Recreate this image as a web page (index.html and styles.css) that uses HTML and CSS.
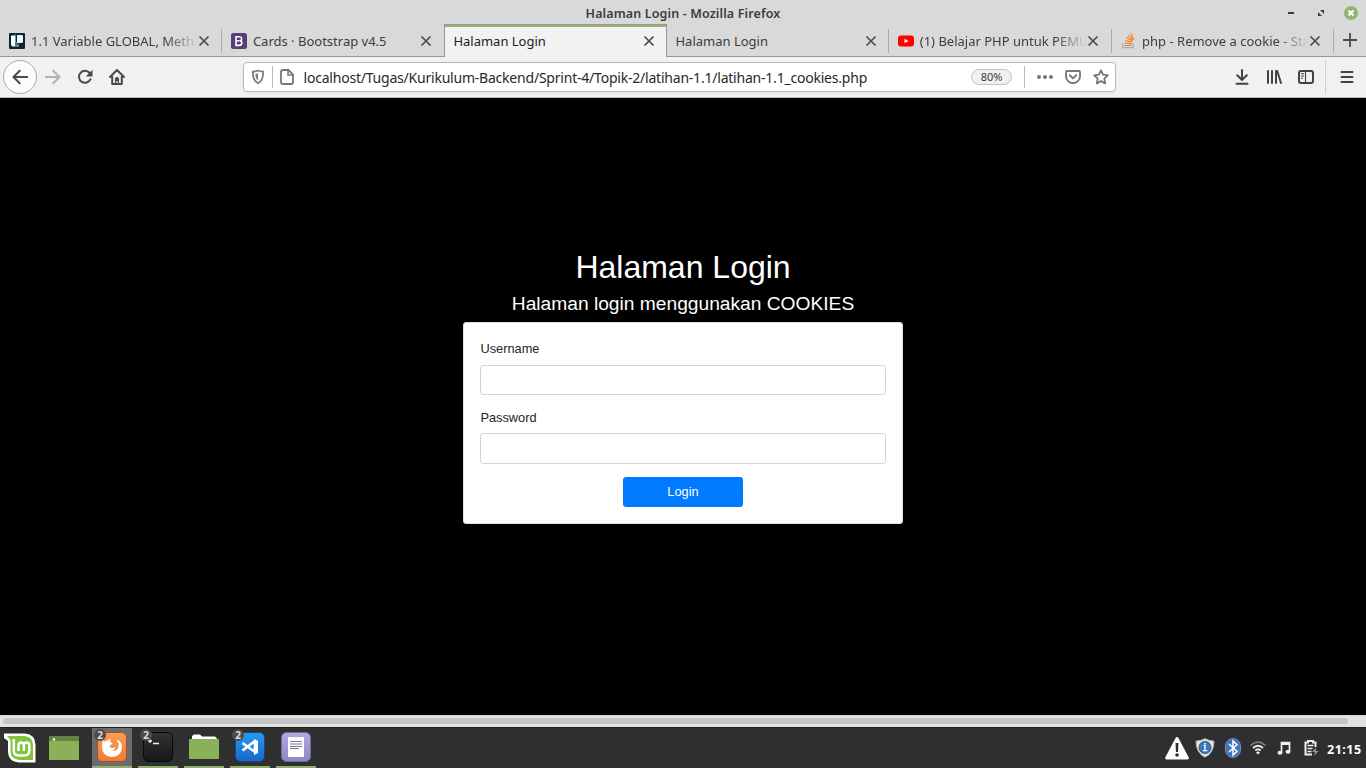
FILE: index.html
```html
<!DOCTYPE html>
<html lang="id">
<head>
<meta charset="utf-8">
<title>Halaman Login</title>
<link rel="stylesheet" href="styles.css">
</head>
<body>
<div class="screen">
  <header class="titlebar">
    <span class="window-title">Halaman Login - Mozilla Firefox</span>
    <div class="window-buttons">
      <svg width="8" height="16" viewBox="0 0 8 16"><path d="M1 7h6v2H1z" fill="#3c3c3c"/></svg>
      <svg width="8" height="16" viewBox="0 0 8 16"><path d="M3 5h4v4zM1 7v4h4z" fill="#3c3c3c"/></svg>
      <svg width="16" height="16" viewBox="0 0 16 16"><circle cx="8" cy="8" r="7" fill="#92b372"/><path d="M5.5 5.5l5 5m0-5l-5 5" stroke="#fff" stroke-width="2"/></svg>
    </div>
  </header>

  <nav class="tabs">
    <div class="tab tab-first">
      <svg class="favicon" width="16" height="16" viewBox="0 0 16 16"><rect width="16" height="16" rx="1" fill="#062733"/><path d="M2 2.500h4.500v11H3.500L2 12z" fill="#fff"/><path d="M8 2h5l1 1v6l-1 1H8z" fill="#eef7fa"/><path d="M5 2l2-1v3zM6 9h2v5H6z" fill="#348ca8"/><path d="M8 11h2v3H8z" fill="#a46c3f"/></svg>
      <span class="tab-label fade">1.1 Variable GLOBAL, Meth</span>
      <svg class="close" width="12" height="12" viewBox="0 0 12 12"><path d="M1.5 1.5l9 9m0-9l-9 9"/></svg>
    </div>
    <div class="tab">
      <svg class="favicon" width="16" height="16" viewBox="0 0 16 16"><rect width="16" height="16" rx="2.5" fill="#563d7c"/><path d="M5 3.700h3.500c2.700 0 2.900 3.400.5 4 2.800.5 2.300 4.700-.8 4.700H5zM5 7.800h3.600" fill="none" stroke="#fff" stroke-width="1.600"/></svg>
      <span class="tab-label">Cards · Bootstrap v4.5</span>
      <svg class="close" width="12" height="12" viewBox="0 0 12 12"><path d="M1.5 1.5l9 9m0-9l-9 9"/></svg>
    </div>
    <div class="tab tab-active">
      <span class="tab-label">Halaman Login</span>
      <svg class="close" width="12" height="12" viewBox="0 0 12 12"><path d="M1.5 1.5l9 9m0-9l-9 9"/></svg>
    </div>
    <div class="tab">
      <span class="tab-label">Halaman Login</span>
      <svg class="close" width="12" height="12" viewBox="0 0 12 12"><path d="M1.5 1.5l9 9m0-9l-9 9"/></svg>
    </div>
    <div class="tab">
      <svg class="favicon" width="16" height="16" viewBox="0 0 16 16"><rect y="2.500" width="16" height="11" rx="3" fill="#f00"/><path d="M6.500 5.700v4.600l4-2.300z" fill="#fff"/></svg>
      <span class="tab-label fade">(1) Belajar PHP untuk PEMU</span>
      <svg class="close" width="12" height="12" viewBox="0 0 12 12"><path d="M1.5 1.5l9 9m0-9l-9 9"/></svg>
    </div>
    <div class="tab">
      <svg class="favicon" width="16" height="16" viewBox="0 0 16 16"><path d="M2.700 10v4.700h10.600V10" fill="none" stroke="#a9adb2" stroke-width="1.300"/><path d="M4.500 12.500h7M4.600 10l7 .9M5.200 7.200l6.600 2.200M6.400 4.600l6 3.500M8.200 2.300l4.900 5M10.800.9l3 5.700" stroke="#f48024" stroke-width="1.200"/></svg>
      <span class="tab-label fade">php - Remove a cookie - Stack</span>
      <svg class="close" width="12" height="12" viewBox="0 0 12 12"><path d="M1.5 1.5l9 9m0-9l-9 9"/></svg>
    </div>
    <div class="new-tab">
      <svg width="14" height="14" viewBox="0 0 14 14"><path d="M7 0v14M0 7h14" stroke="#4a4a4a" stroke-width="1.800"/></svg>
    </div>
  </nav>

  <div class="toolbar">
    <div class="back"><svg width="16" height="16" viewBox="0 0 16 16"><path d="M15.200 8H1.500M7.700 1.800L1.500 8l6.200 6.200" fill="none" stroke="#4a4a4a" stroke-width="2" stroke-linecap="round" stroke-linejoin="round"/></svg></div>
    <div class="nav-icons">
      <svg width="16" height="16" viewBox="0 0 16 16"><path d="M.8 8h13.700M8.300 1.800L14.500 8l-6.200 6.200" fill="none" stroke="#b2b2b2" stroke-width="2" stroke-linecap="round" stroke-linejoin="round"/></svg>
      <svg width="16" height="16" viewBox="0 0 16 16"><path d="M13.500 10.200A6 6 0 1 1 12.600 4" fill="none" stroke="#4a4a4a" stroke-width="2" stroke-linecap="round"/><path d="M15.500.8v6.700H8.800z" fill="#4a4a4a"/></svg>
      <svg width="16" height="16" viewBox="0 0 16 16"><path d="M1 8l7-7 7 7M3.200 7.200V15h9.600V7.200" fill="none" stroke="#4a4a4a" stroke-width="2" stroke-linecap="round" stroke-linejoin="round"/><path d="M6 15V9.500Q6 8 8 8t2 1.500V15H8.800v-3H7.300v3z" fill="#4a4a4a"/></svg>
    </div>
    <div class="urlbar">
      <svg class="shield" width="14" height="16" viewBox="0 0 14 16"><path d="M7 1.500c2 .9 3.600 1.100 5.200 1.200.1 5-.8 9.200-5.200 11.600C2.600 11.900 1.700 7.700 1.800 2.700 3.400 2.600 5 2.400 7 1.500z" fill="none" stroke="#7d7d7d" stroke-width="1.800"/><path d="M7 4.300v7.200C5 9.900 4.400 7.600 4.400 5q1.500-.1 2.600-.7z" fill="#7d7d7d"/></svg>
      <span class="url-rule"></span>
      <svg class="doc" width="14" height="16" viewBox="0 0 14 16"><path d="M3 1h5.500L13 5.500V13q0 2-2 2H3q-2 0-2-2V3q0-2 2-2z" fill="none" stroke="#777" stroke-width="1.800"/><path d="M8 1v5h5" fill="none" stroke="#777" stroke-width="1.500"/></svg>
      <span class="url">localhost/Tugas/Kurikulum-Backend/Sprint-4/Topik-2/latihan-1.1/latihan-1.1_cookies.php</span>
      <span class="zoom">80%</span>
      <span class="url-rule"></span>
      <div class="url-icons">
        <svg width="16" height="16" viewBox="0 0 16 16"><g fill="#777"><circle cx="2" cy="8" r="2"/><circle cx="8" cy="8" r="2"/><circle cx="14" cy="8" r="2"/></g></svg>
        <svg width="16" height="16" viewBox="0 0 16 16"><path d="M2 2h12q1 0 1 1v4.200a7 7 0 0 1-14 0V3q0-1 1-1z" fill="none" stroke="#777" stroke-width="1.900"/><path d="M4.800 6.300L8 9.400l3.200-3.100" fill="none" stroke="#777" stroke-width="2" stroke-linecap="round" stroke-linejoin="round"/></svg>
        <svg width="16" height="16" viewBox="0 0 16 16"><path d="M8 1.400l2 4.200 4.800.7-3.500 3.300.9 4.800L8 12.100l-4.200 2.300.9-4.800L1.200 6.300 6 5.600z" fill="none" stroke="#777" stroke-width="1.800" stroke-linejoin="round"/></svg>
      </div>
    </div>
    <div class="tool-icons">
      <svg width="16" height="16" viewBox="0 0 16 16"><path d="M8 1v9.800M3.200 6.200L8 11l4.800-4.800M2.500 14.800h11" fill="none" stroke="#424242" stroke-width="2" stroke-linecap="round" stroke-linejoin="round"/></svg>
      <svg width="16" height="16" viewBox="0 0 16 16"><path d="M2 2v12M6 2v12M10 2v12M11.200 2L15 14" fill="none" stroke="#424242" stroke-width="2" stroke-linecap="round"/></svg>
      <svg width="16" height="16" viewBox="0 0 16 16"><rect x="1" y="2" width="14" height="12" rx="2" fill="none" stroke="#424242" stroke-width="2"/><path d="M7.500 2v12M3 4.800h3M3 7h3M3 9.200h2" stroke="#424242" stroke-width="1.100"/></svg>
    </div>
    <div class="menu"><svg width="14" height="16" viewBox="0 0 14 16"><path d="M1.500 3h11M1.500 8h11M1.500 13h11" stroke="#424242" stroke-width="2" stroke-linecap="round"/></svg></div>
  </div>

  <main class="page">
    <h1>Halaman Login</h1>
    <h2>Halaman login menggunakan COOKIES</h2>
    <form class="card">
      <label for="username">Username</label>
      <input id="username" type="text">
      <label for="password">Password</label>
      <input id="password" type="password">
      <button type="button">Login</button>
    </form>
  </main>

  <div class="scrollbar"><div class="thumb"></div></div>

  <footer class="panel">
    <svg class="mint" width="34" height="32" viewBox="0 0 34 32"><path d="M1 1.500h21Q32.500 2.500 32.500 13v17.500H16Q5 29.500 5 19V9L1 6z" fill="#fff"/><path d="M4 4h17.500Q30 5 30 13v15H16Q7.500 27 7.500 19V8z" fill="#81c341"/><path d="M10.800 7v11.500q0 5 5 5h5.500q5 0 5-5v-5q0-3-2.700-3t-2.700 3v5.500m0-5.500q0-3-2.700-3t-2.700 3v5.500" fill="none" stroke="#fff" stroke-width="2.500"/></svg>
    <svg class="desktop" width="30" height="24" viewBox="0 0 30 24"><rect width="30" height="24" fill="#8bb158"/><path d="M0 0h30v5H0z" fill="#668341"/><circle cx="5" cy="3.500" r="1.200" fill="#fff"/></svg>
    <div class="tasks">
      <div class="task focused">
        <svg width="30" height="30" viewBox="0 0 30 30"><defs><linearGradient id="orange" x2="0" y2="1"><stop stop-color="#fc9d58"/><stop offset="1" stop-color="#f27a33"/></linearGradient></defs><rect x=".5" y=".5" width="29" height="29" rx="5" fill="url(#orange)" stroke="#9a552a"/><path d="M7 6q-1 2.500 0 4 2-1.800 4-1.500l2.500-2-.3 3.300 2.500 1.700-3.200 2.200q.3 2.300 2.700 2.300 2 0 3.800-1.500-1.300 4.300-5 3.500 6 2.300 7.500-3 .8-4-2.500-7.500Q25 9 25 15q-.4 9.700-10 10Q5 24.500 5 14.500q0-5 2-8.500z" fill="#fff"/></svg>
        <span class="badge">2</span>
      </div>
      <div class="task">
        <svg width="30" height="30" viewBox="0 0 30 30"><defs><linearGradient id="black" x2="0" y2="1"><stop stop-color="#333"/><stop offset="1" stop-color="#171717"/></linearGradient></defs><rect x=".5" y=".5" width="29" height="29" rx="5" fill="url(#black)" stroke="#080808"/><path d="M5 9h4M7 7v4M10 11.500h6" stroke="#eee" stroke-width="1.300"/></svg>
        <span class="badge">2</span>
      </div>
      <div class="task">
        <svg width="30" height="30" viewBox="0 0 30 30"><path d="M3 8V4l2-1.500h6L13 4.500h13l2 2v4H3z" fill="#fff"/><path d="M0 8q0-1 1-1h28q1 0 1 1v18q0 1-1 1H1q-1 0-1-1z" fill="#8bb158"/></svg>
      </div>
      <div class="task">
        <svg width="30" height="30" viewBox="0 0 30 30"><defs><linearGradient id="blue" x2="0" y2="1"><stop stop-color="#259bf1"/><stop offset="1" stop-color="#1768c7"/></linearGradient></defs><rect x=".5" y=".5" width="29" height="29" rx="5" fill="url(#blue)" stroke="#174778"/><path d="M7.500 11l12.500 9V9L7.500 18.500" fill="none" stroke="#fff" stroke-width="2.700" stroke-linejoin="round"/><path d="M19 7l4 2v12l-4 2z" fill="#fff"/></svg>
        <span class="badge">2</span>
      </div>
      <div class="task">
        <svg width="30" height="30" viewBox="0 0 30 30"><defs><linearGradient id="violet" x2="0" y2="1"><stop stop-color="#b1aae0"/><stop offset="1" stop-color="#8f87c5"/></linearGradient></defs><rect x=".5" y=".5" width="29" height="29" rx="5" fill="url(#violet)" stroke="#716b99"/><path d="M7 5h16v20H7z" fill="#fff"/><path d="M9 9.500h12M9 12h12M9 14.500h12M9 16.500h9" stroke="#77779d"/></svg>
      </div>
    </div>
    <div class="tray">
      <svg width="24" height="24" viewBox="0 0 24 24"><path d="M12 2.500L22.300 22H1.700z" fill="#fff" stroke="#fff" stroke-width="3" stroke-linejoin="round"/><path d="M10.500 7h3l-.5 9h-2z" fill="#2f2f2f"/><circle cx="12" cy="19" r="1.800" fill="#2f2f2f"/></svg>
      <svg width="20" height="20" viewBox="0 0 20 20"><path d="M10 .7q4 2 9 2.500-.2 12-9 16-8.800-4-9-16 5-.5 9-2.500z" fill="#e8e8df" stroke="#b4b4ad"/><circle cx="10" cy="9.500" r="6" fill="#3978b9" stroke="#215790"/><path d="M8.500 7.700H10v5M8 12.700h4.300" fill="none" stroke="#fff" stroke-width="1.300"/><circle cx="10" cy="5.700" r=".9" fill="#fff"/></svg>
      <svg width="16" height="20" viewBox="0 0 16 20"><rect x=".5" y=".5" width="15" height="19" rx="7.500" fill="#4275b7" stroke="#5c91cc"/><path d="M4 6l8 7.500-4 3.500V3l4 3.700L4 14" fill="none" stroke="#fff" stroke-width="1.500"/></svg>
      <svg width="16" height="14" viewBox="0 0 16 14"><path d="M.5 4.500q7.500-7 15 0" fill="none" stroke="#777" stroke-width="1.800"/><path d="M3 7q5-4.600 10 0M5.300 9.500q2.700-2.500 5.400 0" fill="none" stroke="#eee" stroke-width="1.800"/><path d="M6 11.500q2-2 4 0l-2 2z" fill="#eee"/></svg>
      <svg width="14" height="14" viewBox="0 0 14 14"><path d="M4.500 11.500V1.500h8V10" fill="none" stroke="#eee" stroke-width="1.700"/><path d="M4 1h9v3H4z" fill="#eee"/><ellipse cx="3" cy="11.700" rx="2.500" ry="2" fill="#eee"/><ellipse cx="11" cy="10.700" rx="2.500" ry="2" fill="#eee"/></svg>
      <svg width="15" height="16" viewBox="0 0 15 16"><path d="M8 14.500H1.500v-12H4V1h5v1.500h2.500V7" fill="none" stroke="#eee" stroke-width="2"/><path d="M3.500 5.500h6M3.500 8.500h5M3.500 11.500h4" stroke="#eee" stroke-width="1.700"/><path d="M12 7.500l-4 4.500h3l-1 4 4.700-5H12z" fill="#929292"/></svg>
      <span class="clock">21:15</span>
    </div>
  </footer>
</div>
</body>
</html>
```
FILE: styles.css
```css
* { box-sizing: border-box; }
body { margin: 0; }
svg { display: block; flex: none; }

.screen {
  width: 1366px;
  height: 768px;
  overflow: hidden;
  display: flex;
  flex-direction: column;
  font-family: "Noto Sans", "Open Sans", sans-serif;
  font-size: 13px;
  color: #3d3d3d;
}

.titlebar {
  height: 24px;
  background: #d9d9d9;
  display: grid;
  grid-template-columns: 1fr auto 1fr;
  align-items: center;
}
.window-title {
  grid-column: 2;
  font-weight: 600;
  font-size: 12.500px;
  letter-spacing: .13px;
  line-height: 24px;
  padding-top: 2px;
  white-space: nowrap;
}
.window-buttons { justify-self: end; display: flex; padding-right: 7px; }
.window-buttons svg:nth-child(2) { margin: 0 18px 0 22px; }

.tabs { height: 33px; display: flex; background: #d9d9d9; }
.tab {
  width: 222.300px;
  flex: none;
  display: flex;
  align-items: center;
  padding: 1px 11.500px 0 9.500px;
  border-bottom: 1px solid #979797;
  background: linear-gradient(#aaa, #aaa) 0 5px / 1px 24px no-repeat;
}
.tab-first { width: 221.400px; padding: 1px 11.400px 0 9px; background: none; }
.tab-active {
  width: 223.300px;
  padding: 0 11px 0 8.700px;
  background: #f2f2f2;
  border: solid #979797;
  border-width: 1px 1px 0;
  box-shadow: inset 0 2px #92b372;
}
.tab-active + .tab { margin-left: -1px; background: none; }
.favicon { margin-right: 6px; }
.tab-label { flex: 1; min-width: 0; overflow: hidden; white-space: nowrap; line-height: 20px; }
.tab-active .tab-label { margin-top: -1px; color: #222; }
.tab-active .close { margin-top: -1px; }
.fade { mask-image: linear-gradient(to right, #000 calc(100% - 32px), transparent); }
.close { stroke: #4c4c4c; stroke-width: 1.700; fill: none; }
.new-tab {
  flex: 1;
  display: flex;
  align-items: center;
  padding-left: 10px;
  border-bottom: 1px solid #979797;
  background: linear-gradient(#aaa, #aaa) 0 5px / 1px 24px no-repeat;
}

.toolbar {
  height: 41px;
  background: #f1f1f1;
  border-bottom: 1px solid #bbb;
  display: flex;
  align-items: center;
  padding-left: 3px;
}
.back {
  width: 34px;
  height: 34px;
  flex: none;
  border: 1px solid #aaa;
  border-radius: 50%;
  background: #fcfcfc;
  display: flex;
  align-items: center;
  justify-content: center;
}
.nav-icons { display: flex; gap: 16px; margin-left: 8px; }
.urlbar {
  margin-left: 118px;
  width: 873px;
  height: 30px;
  flex: none;
  display: flex;
  align-items: center;
  background: #fff;
  border: 1px solid #b9b9b9;
  border-radius: 4px;
  box-shadow: 0 1px 3px #0001;
}
.shield { margin: 0 7px; }
.url-rule { width: 1px; height: 22px; background: #bababa; flex: none; }
.doc { margin: 0 9.500px 0 7px; }
.url {
  flex: 1;
  padding-top: 1px;
  white-space: nowrap;
  color: #292929;
  font-size: 14px;
  letter-spacing: -.215px;
  line-height: 26px;
}
.zoom {
  width: 41px;
  height: 16px;
  border: 1px solid #c4c4c4;
  border-radius: 8px;
  background: #f0f0f0;
  font-size: 11px;
  line-height: 14px;
  text-align: center;
  margin-right: 12px;
}
.url-icons { display: flex; gap: 12px; margin: 0 6px 0 12px; }
.tool-icons { display: flex; gap: 16px; margin-left: 118px; }
.menu {
  margin-left: 11px;
  height: 34px;
  border-left: 1px solid #d0d0d0;
  padding-left: 14px;
  display: flex;
  align-items: center;
}

.page {
  height: 617px;
  background: #000;
  color: #fff;
  padding-top: 149.800px;
  display: flex;
  flex-direction: column;
  align-items: center;
  font-family: "Liberation Sans", Arial, sans-serif;
}
h1, h2 { font-weight: 400; line-height: 1.2; }
h1 { font-size: 32px; margin: 0 0 5.600px; }
h2 { font-size: 19.200px; margin: 0 0 7.200px; }
.card {
  width: 440px;
  height: 202px;
  padding: 16px;
  border: 1px solid #dfdfdf;
  border-radius: 3px;
  background: #fff;
  color: #212529;
  display: flex;
  flex-direction: column;
  font-size: 12.800px;
}
.card label { line-height: 19.200px; margin-bottom: 6.400px; padding-left: .4px; }
.card input {
  height: 30.400px;
  flex: none;
  margin: 0 0 12.800px;
  padding: 4px 9px;
  border: 1px solid #ced4da;
  border-radius: 3.200px;
  background: #fff;
}
.card button {
  align-self: center;
  width: 120px;
  height: 30.400px;
  flex: none;
  border: 0;
  border-radius: 3.200px;
  padding: 0;
  background: #007bff;
  color: #fff;
  font: 12.800px "Liberation Sans", Arial, sans-serif;
}

.scrollbar { height: 12px; background: #e2e2e0; padding: 2px 18px 3px 3px; border-top: 1px solid #d3d3d1; }
.thumb { height: 6px; border-radius: 3px; background: #c4c6c4; }

.panel { height: 41px; background: #2f2f2f; display: flex; align-items: center; border-top: 1px solid #1f1f1f; }
.mint { margin-left: 3px; }
.desktop { margin-left: 12px; }
.tasks { display: flex; gap: 6px; margin-left: 13px; align-self: stretch; }
.task {
  position: relative;
  width: 40px;
  border-bottom: 2px solid #8faf70;
  display: flex;
  align-items: center;
  justify-content: center;
}
.focused { background: #6c6c6c; }
.badge {
  position: absolute;
  left: 2px;
  top: 1px;
  width: 12px;
  height: 12px;
  border-radius: 50%;
  background: #4b4b4b;
  color: #ddd;
  font: bold 10px/12px "Noto Sans", sans-serif;
  text-align: center;
}
.tray { margin-left: auto; display: flex; align-items: center; padding-right: 4px; }
.tray svg:nth-child(2) { margin-left: 6px; }
.tray svg:nth-child(3) { margin-left: 10px; }
.tray svg:nth-child(4) { margin-left: 9px; }
.tray svg:nth-child(5) { margin-left: 11px; }
.tray svg:nth-child(6) { margin-left: 13px; }
.clock {
  margin-left: 8px;
  width: 35px;
  padding-top: 2px;
  color: #fff;
  font-size: 12.500px;
  font-weight: 700;
  letter-spacing: .5px;
  white-space: nowrap;
}
```
